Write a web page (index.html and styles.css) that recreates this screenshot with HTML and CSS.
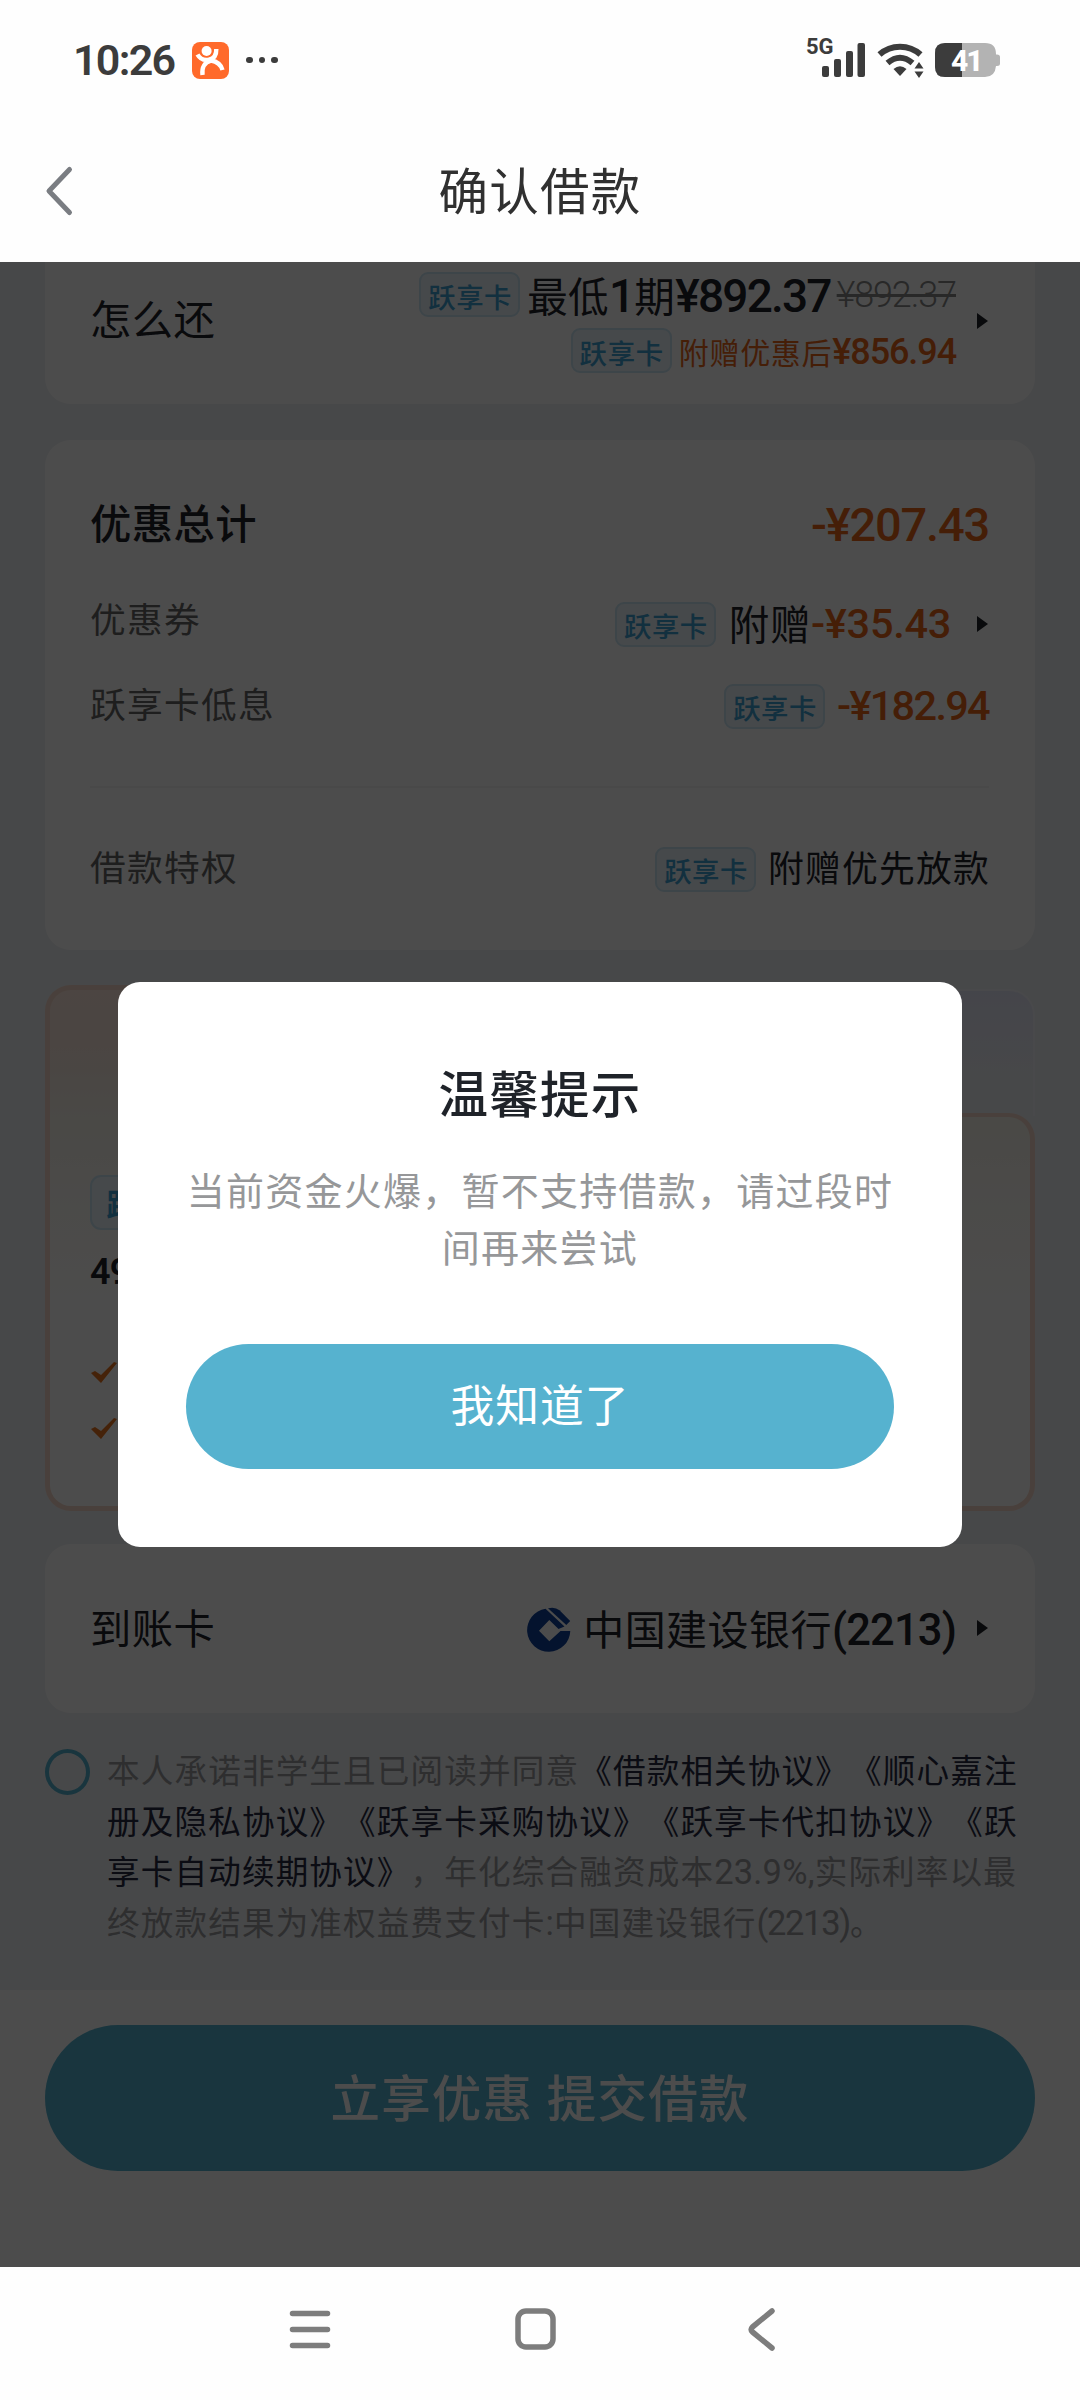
FILE: index.html
```html
<!DOCTYPE html>
<html lang="zh-CN">
<head>
<meta charset="utf-8">
<title>确认借款</title>
<link rel="stylesheet" href="styles.css">
</head>
<body>
<div class="phone">
  <header class="status">
    <span class="clock">10:26</span>
    <svg class="app-icon" width="37" height="37" viewBox="0 0 37 37">
      <rect width="37" height="37" rx="8" fill="#ff6a2b"/>
      <circle cx="14.6" cy="9" r="5" fill="#fff"/>
      <g fill="none" stroke="#fff" stroke-width="4.4">
        <path d="M5.500 12.500C8 17 12 18.600 17 17.600S24.500 12.500 24.300 7"/>
        <path d="M10.500 33C9.500 25 13 20 19 18.500C25 19.500 29 22.500 30.500 28"/>
      </g>
    </svg>
    <span class="dots"><i></i><i></i><i></i></span>
    <svg class="signals" width="200" height="44" viewBox="0 0 200 44">
      <text x="6" y="20" class="net">5G</text>
      <g fill="#3c3c3c">
        <rect x="22" y="32" width="7" height="11" rx="2"/>
        <rect x="34" y="25" width="7" height="18" rx="2"/>
        <rect x="46" y="17" width="7" height="26" rx="2"/>
        <rect x="57.500" y="9" width="7.500" height="34" rx="2"/>
        <path d="M100 42L93.500 35Q100 29.500 106.500 35Z"/>
        <path d="M119 28l4.500 6.500h-9zM119 44l4.500-6.500h-9z"/>
      </g>
      <g fill="none" stroke="#3c3c3c" stroke-width="6">
        <path d="M79.500 20.500C91 10 109 10 120.500 20.500"/>
        <path d="M87.500 29Q100 18.500 112.500 29"/>
      </g>
      <path d="M145 9H185Q196 9 196 20V20.500H197Q200 20.500 200 23V29.500Q200 32 197 32H196Q195 43 185 43H145Q135 43 135 33V19Q135 9 145 9Z" fill="#b3b3b3"/>
      <path d="M145 9H162V43H145Q135 43 135 33V19Q135 9 145 9Z" fill="#3c3c3c"/>
      <text x="151" y="36.500" class="charge">41</text>
    </svg>
  </header>

  <nav class="titlebar">
    <svg class="back" width="30" height="52" viewBox="0 0 30 52"><path d="M25.500 4.500L5 26L25.500 47.500" fill="none" stroke="#7a7d82" stroke-width="5" stroke-linecap="round" stroke-linejoin="round"/></svg>
    <h1>确认借款</h1>
  </nav>

  <main class="page">
    <section class="card repay">
      <div class="row">
        <span class="label">怎么还</span>
        <div class="side">
          <div class="stack">
            <div class="line"><span class="tag">跃享卡</span><span class="strong">最低<b class="num one">1</b>期<b class="num n46">¥892.37</b></span><s>¥892.37</s></div>
            <div class="line offer"><span class="tag">跃享卡</span><span>附赠优惠后<b class="num n36">¥856.94</b></span></div>
          </div>
          <i class="arrow"></i>
        </div>
      </div>
    </section>

    <section class="card discount">
      <div class="row total"><span class="label bold">优惠总计</span><span class="num orange n47">-¥207.43</span></div>
      <div class="row coupon"><span class="label small">优惠券</span><div class="side"><span class="tag">跃享卡</span><span class="gift">附赠</span><span class="num orange n40">-¥35.43</span><i class="arrow"></i></div></div>
      <div class="row low"><span class="label small">跃享卡低息</span><div class="side"><span class="tag">跃享卡</span><span class="num orange n40">-¥182.94</span></div></div>
      <hr>
      <div class="row perk"><span class="label small">借款特权</span><div class="side"><span class="tag">跃享卡</span><span class="perk-name">附赠优先放款</span></div></div>
    </section>

    <section class="plans">
      <div class="tabs"><div class="tab active"></div><div class="tab"></div></div>
      <div class="plan-body">
        <span class="tag big">跃享卡</span>
        <div class="price num">49</div>
        <svg class="check" width="26" height="22" viewBox="0 0 26 22"><path d="M0 11L4 9L10 13L23 0L26 1L10 21Z" fill="#e8741e"/></svg>
        <svg class="check" width="26" height="22" viewBox="0 0 26 22"><path d="M0 11L4 9L10 13L23 0L26 1L10 21Z" fill="#e8741e"/></svg>
      </div>
    </section>

    <section class="card account">
      <div class="row">
        <span class="label">到账卡</span>
        <div class="side">
          <svg class="bank" width="44" height="46" viewBox="0 0 44 46" fill="#0f4299">
            <path d="M18.500 1.800A21.600 21.600 0 1 0 43.300 24H33.500L22.300 34.300L12 23.700L22.300 13L31.500 22L37.500 19.500Z"/>
            <path d="M21 1.200Q28 -.5 32.500 3.200L43.200 14L39.300 18Z"/>
          </svg>
          <span class="bank-name">中国建设银行<span class="num n45">(2213)</span></span>
          <i class="arrow"></i>
        </div>
      </div>
    </section>

    <section class="agree">
      <i class="radio"></i>
      <p>本人承诺非学生且已阅读并同意<a>《借款相关协议》《顺心嘉注</a><br><a>册及隐私协议》《跃享卡采购协议》《跃享卡代扣协议》《跃</a><br><a>享卡自动续期协议》</a>，年化综合融资成本<span class="num">23.9%,</span>实际利率以最<br>终放款结果为准权益费支付卡<span class="num">:</span>中国建设银行<span class="num tight">(2213)</span>。</p>
    </section>

    <footer class="submit"><button>立享优惠 提交借款</button></footer>

    <div class="mask">
      <div class="dialog">
        <h2>温馨提示</h2>
        <p>当前资金火爆，暂不支持借款，请过段时<br>间再来尝试</p>
        <button>我知道了</button>
      </div>
    </div>
  </main>

  <nav class="keys">
    <svg width="1080" height="133" viewBox="0 0 1080 133" fill="none" stroke="#7d7d7d" stroke-width="5.500" stroke-linecap="round" stroke-linejoin="round">
      <path d="M292.500 46.500H327.500M292.500 62.500H327.500M292.500 78.500H327.500"/>
      <rect x="518" y="44" width="35" height="36" rx="8"/>
      <path d="M772 44L752.500 60Q750 62.500 752.500 65L772 81"/>
    </svg>
  </nav>
</div>
</body>
</html>
```
FILE: styles.css
```css
* { box-sizing: border-box; margin: 0; padding: 0; }
body {
  width: 1080px;
  font-family: Roboto, "Noto Sans CJK SC", sans-serif;
  letter-spacing: 0.03em;
  text-spacing-trim: space-all;
  color: #1f2329;
  background: #fff;
}
.phone { display: flex; flex-direction: column; width: 1080px; height: 2400px; overflow: hidden; }
button { border: 0; font: inherit; letter-spacing: inherit; color: #fff; background: #56b2cf; }
i { font-style: normal; }

.status { display: flex; align-items: center; height: 120px; padding: 0 80px 0 73px; background: #fefefe; }
.clock { width: 119px; font-size: 43px; font-weight: 600; letter-spacing: -1.700px; color: #3c3c3c; white-space: nowrap; }
.app-icon { flex: none; }
.dots { display: flex; gap: 6px; margin-left: 17px; }
.dots i { width: 6.500px; height: 6.500px; border-radius: 50%; background: #3c3c3c; }
.signals { margin-left: auto; margin-bottom: 9px; }
.net { font: 700 22px Roboto; letter-spacing: 0; fill: #3c3c3c; }
.charge { font: 800 30px Roboto; letter-spacing: -2px; fill: #fff; }

.titlebar { display: grid; grid-template-columns: 120px 1fr 120px; align-items: center; height: 142px; background: #fefefe; }
.back { margin-left: 44px; }
h1 { padding-top: 4px; font-size: 49.500px; font-weight: 400; letter-spacing: 1.200px; color: #303030; text-align: center; line-height: 60px; }

.page { position: relative; height: 2005px; background: #eff1f4; display: flex; flex-direction: column; }
.card { margin: 0 45px; padding: 0 46px 0 45px; border-radius: 26px; background: #fff; }
.row { display: flex; align-items: center; justify-content: space-between; }
.side { display: flex; align-items: center; }
.label { margin-bottom: 7px; font-size: 41.300px; }
.label.bold { margin-bottom: 6px; font-weight: 500; }
.label.small { font-size: 35.700px; letter-spacing: 0.037em; color: #666; }
.num { font-family: Roboto, sans-serif; font-weight: 470; letter-spacing: -0.02em; line-height: 1; }
.orange { color: #e8661a; }
.arrow { border-left: 11px solid #1f2329; border-top: 8px solid transparent; border-bottom: 8px solid transparent; }
.tag {
  display: inline-flex; align-items: center; justify-content: center;
  width: 101px; height: 45px; padding: 2px 0 0 1px;
  border: 2px solid #cde6f5; border-radius: 9px; background: #e9f4fb;
  font-size: 27.400px; font-weight: 500; color: #3fa0d2; white-space: nowrap;
}

.repay { height: 142px; border-radius: 0 0 26px 26px; }
.repay .row { height: 117px; }
.repay .side { gap: 21px; margin-right: 1px; }
.stack { display: flex; flex-direction: column; align-items: flex-end; gap: 11px; padding-top: 4px; }
.line { display: flex; align-items: center; height: 45px; white-space: nowrap; }
.strong { margin-left: 7px; padding-bottom: 1px; font-size: 40.500px; font-weight: 400; }
.one { font-size: 46px; }
.n46 { font-size: 46px; letter-spacing: -1.800px; }
.line s { margin-left: 6px; font-size: 36px; font-weight: 300; letter-spacing: -1.100px; color: #888; }
.offer { font-size: 30px; letter-spacing: 0.700px; color: #e8661a; }
.offer .tag { margin-right: 7px; letter-spacing: 0.03em; }
.n36 { font-size: 36px; font-weight: 500; letter-spacing: -1.100px; }

.discount { height: 510px; margin-top: 36px; padding-top: 48px; }
.total { height: 72px; }
.n47 { font-size: 47px; letter-spacing: -1.200px; }
.coupon { height: 124px; }
.coupon .label { margin-bottom: 10px; }
.coupon .side { padding-top: 4px; }
.gift { margin-left: 13px; margin-bottom: 4px; font-size: 40.500px; letter-spacing: 0.600px; }
.n40 { font-size: 41.500px; }
.coupon .num { letter-spacing: -0.300px; }
.coupon .arrow { margin: 0 1px 0 26px; }
.low { height: 44px; }
.low .num { margin-left: 12px; letter-spacing: -1.700px; }
hr { border: 0; height: 2px; margin-top: 58px; background: #f3f3f4; }
.perk { height: 162px; }
.perk-name { margin: 0 -1px 6px 12px; font-size: 35.800px; letter-spacing: 1.200px; }

.plans { display: flex; flex-direction: column; margin: 35px 45px 0; height: 526px; }
.tabs { display: flex; height: 131px; }
.tab { flex: 1; margin-top: 4px; border: 2px solid #f3f4fb; border-bottom: 0; border-radius: 0 26px 0 0; background: linear-gradient(#e5e7f8, #eff1f6 70%); }
.tab.active { position: relative; z-index: 1; margin: 0 0 -1px; border: 5px solid #f6d8c8; border-bottom: 0; border-radius: 26px 26px 0 0; background: linear-gradient(#fde8de, #fae8de 45%, #f7f3ea); }
.plan-body {
  flex: 1; display: flex; flex-direction: column; align-items: flex-start;
  margin-top: -3px; padding: 58px 0 0 40px;
  border: 5px solid #f6d8c8; border-top-width: 4px; border-radius: 0 26px 26px 26px;
  background: linear-gradient(#f7f3ea, #fcfaf5 90px, #fff 200px);
}
.tag.big { width: 126px; height: 55px; border-radius: 11px; font-size: 31px; letter-spacing: 0; padding: 0; font-weight: 700; }
.price { margin-top: 24px; font-size: 36px; font-weight: 600; }
.check { margin-top: 72px; margin-left: 1px; }
.check + .check { margin-top: 34px; }

.account { height: 169px; margin-top: 33px; }
.account .row { height: 168px; }
.account .label { margin-bottom: 4px; }
.bank { margin: 3px 12px 0 0; }
.bank-name { margin-bottom: 3px; font-size: 41px; font-weight: 400; }
.n45 { font-size: 43.500px; letter-spacing: -0.020em; }
.account .arrow { margin: 0 1px 0 21px; }

.agree { display: flex; margin-top: 36px; height: 241px; padding-left: 45px; }
.radio { flex: none; width: 45px; height: 46px; border: 4px solid #56b2cf; border-radius: 50%; }
.agree p { margin: -2px 0 0 17px; font-size: 32.600px; letter-spacing: 1.150px; line-height: 50.700px; color: #9a9b9e; white-space: nowrap; }
.agree a { color: #262a42; font-weight: 400; }
.agree .num { font-weight: 400; font-size: 34.500px; letter-spacing: 0.200px; }
.agree .tight { letter-spacing: -1.300px; }

.submit { flex: 1; padding: 35px 45px 0; background: #fff; }
.submit button { display: block; width: 100%; height: 146px; padding-bottom: 6px; border-radius: 73px; font-size: 49.500px; font-weight: 500; letter-spacing: 1.200px; }

.mask { position: absolute; z-index: 2; inset: 0; display: flex; align-items: center; justify-content: center; background: rgba(0, 0, 0, 0.7); }
.dialog { width: 844px; height: 565px; padding: 85px 68px 0; border-radius: 22px; background: #fff; text-align: center; }
h2 { font-size: 49.500px; font-weight: 500; letter-spacing: 1.200px; line-height: 58px; color: #1f2329; }
.dialog p { margin-top: 39px; font-size: 38px; letter-spacing: 1.250px; line-height: 57.400px; color: #969799; white-space: nowrap; }
.dialog button { width: 708px; height: 125px; margin-top: 65px; padding-bottom: 6px; border-radius: 63px; font-size: 43.800px; letter-spacing: 1px; }

.keys { height: 133px; background: #fefefe; }
```
